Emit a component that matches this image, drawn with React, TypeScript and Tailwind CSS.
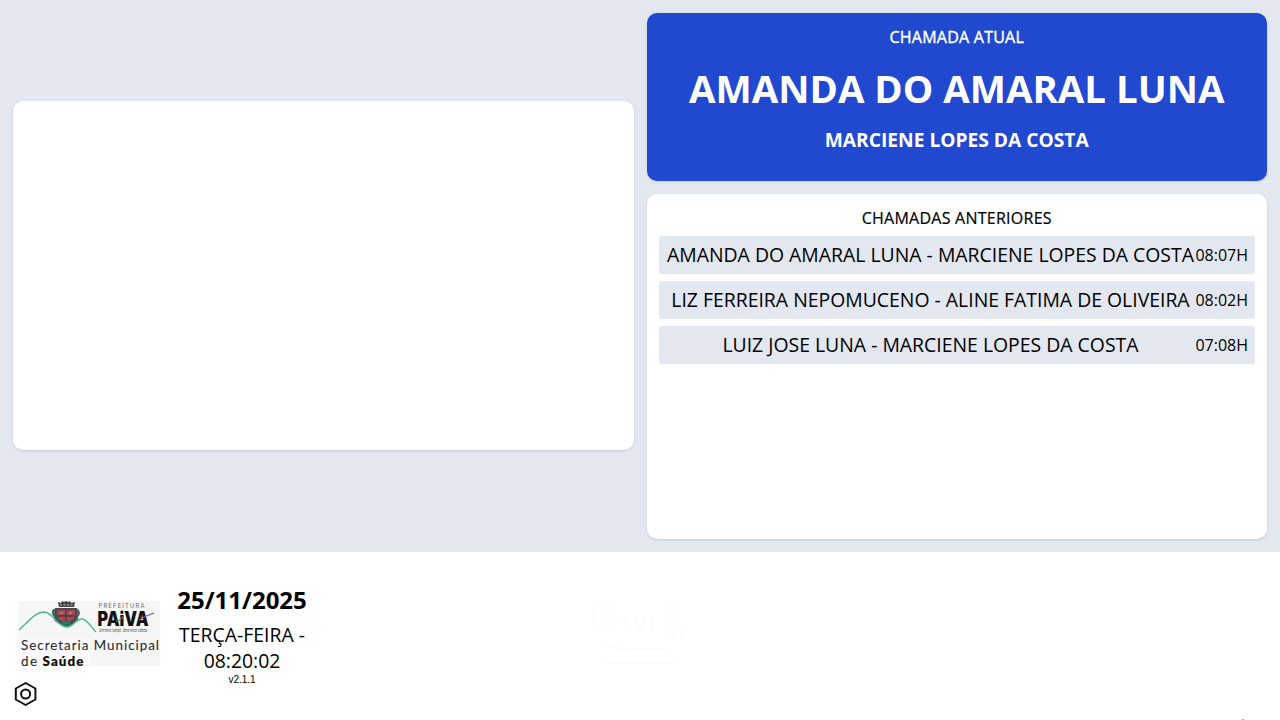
import React from 'react';

type Call = {
  patient: string;
  professional: string;
  time: string;
};

const previousCalls: Call[] = [
  { patient: 'AMANDA DO AMARAL LUNA', professional: 'MARCIENE LOPES DA COSTA', time: '08:07H' },
  { patient: 'LIZ FERREIRA NEPOMUCENO', professional: 'ALINE FATIMA DE OLIVEIRA', time: '08:02H' },
  { patient: 'LUIZ JOSE LUNA', professional: 'MARCIENE LOPES DA COSTA', time: '07:08H' },
];

const CityLogo = () => (
  <svg width="143" height="70" viewBox="0 0 143 70" className="block">
    <rect width="142" height="65" fill="#f6f6f6" />
    <rect y="38" width="72" height="27" fill="#fbfbfb" />
    {/* crest */}
    <g transform="translate(1 0)">
      <path d="M40 6l-1-5 3 1 1-2 2 1 2-1 2 1 2-1 1 2 4-1-1 5z" fill="#444" />
      <path d="M41 4h14" stroke="#bbb" strokeWidth="1" strokeDasharray="2 1.5" />
      <path d="M34 8q-3 4 1 8-1 4 4 6 8 6 16 0 5-2 4-6 4-4 0-8z" fill="#4d6b60" />
      <path d="M36 7h22v8q-1 8-11 11-10-3-11-11z" fill="#4c484e" />
      <path d="M38 9h18v6q-1 5-9 6-8-1-9-6z" fill="#a34a55" />
      <path d="M38 15h18M47 9v11" stroke="#4c3942" strokeWidth="1.4" />
      <path d="M41 12h3M50 12h3" stroke="#c99" strokeWidth="1.2" />
      <path d="M42 19q5 4 10 0l-2 5h-6z" fill="#2f7762" />
    </g>
    {/* hills */}
    <path
      d="M1 29C9 22 17 11 26 11c9 0 13 15 23 15 7 0 8-8 15-8 5 0 8 7 14 13"
      fill="none"
      stroke="#43b98e"
      strokeWidth="1.4"
    />
    <g className="[font-family:Inter,'Liberation_Sans',sans-serif]">
      <text x="80.5" y="7" fontSize="5.8" fill="#666" textLength="46">PREFEITURA</text>
      <text x="79.5" y="24.5" fontSize="19.5" fontWeight="900" fill="#111" textLength="51" lengthAdjust="spacingAndGlyphs">
        PAiVA
      </text>
      <path d="M98 20q4 0 8-5" fill="none" stroke="#35a67b" strokeWidth="1.2" />
      <path d="M121 19q6-4 15-7" fill="none" stroke="#8b4b9c" strokeWidth="1.3" />
      <text x="81" y="31" fontSize="4.6" fontStyle="italic" fill="#444" textLength="49" lengthAdjust="spacingAndGlyphs">
        Um novo tempo. Uma nova cidade.
      </text>
    </g>
    <g fontSize="13.4" fill="#2b2b2b" className="[font-family:Lato,'Open_Sans',sans-serif]">
      <text x="3" y="49" stroke="#2b2b2b" strokeWidth="0.1" textLength="138">Secretaria Municipal</text>
      <text x="3" y="64.5" stroke="#2b2b2b" strokeWidth="0.1" textLength="16">de</text>
      <text x="24.5" y="64.5" fontWeight="800" fill="#111" textLength="41">Saúde</text>
    </g>
  </svg>
);

const SettingsIcon = () => (
  <svg width="24" height="26" viewBox="0 0 24 26" fill="none" stroke="#111" strokeWidth="2" strokeLinejoin="round">
    <path d="M11.6 2l9.8 5.5v11L11.6 24l-9.8-5.5v-11z" />
    <circle cx="11.6" cy="13" r="4.5" />
  </svg>
);

// barely visible white-on-white logo in the footer
const FadedLogo = () => (
  <svg width="100" height="72" viewBox="0 0 100 72" fill="none" stroke="#fbfbfb" strokeWidth="2">
    <path d="M4 4v17q2 10 10 9M18 4v26M33 16l4 12M44 16l6 13 6-13M62 15v15M82 3v35h6M92 29v12" />
    <path d="M13 43q12 7 33 6h30M14 63h72" />
  </svg>
);

const App = () => {
  return (
    <div className="flex h-[720px] w-[1280px] flex-col overflow-hidden bg-white text-black [font-family:'Open_Sans','Noto_Sans',sans-serif]">
      <main className="grid h-[552px] grid-cols-2 gap-[13px] bg-[#e3e7f0] p-[13px]">
        <section className="mb-px h-[349px] self-center rounded-[10px] bg-white shadow-sm" />

        <div className="flex flex-col gap-[13px]">
          <section className="flex h-[168px] flex-col items-center rounded-[10px] bg-[#2149cf] text-white shadow-sm">
            <h2 className="mt-[12px] text-[16px] font-medium leading-[24px] tracking-[0.25px] [-webkit-text-stroke:0.4px]">
              CHAMADA ATUAL
            </h2>
            <h1 className="mt-[13px] text-[38.4px] font-bold leading-[52px] whitespace-nowrap">AMANDA DO AMARAL LUNA</h1>
            <p className="mt-[13px] text-[19.2px] font-bold leading-[26px]">MARCIENE LOPES DA COSTA</p>
          </section>

          <section className="flex h-[345px] flex-col rounded-[10px] bg-white px-[12.5px] pt-[12px] shadow-sm">
            <h2 className="text-center text-[16px] font-medium leading-[24px] tracking-[0.25px] [-webkit-text-stroke:0.2px]">
              CHAMADAS ANTERIORES
            </h2>
            <ul className="mt-[6px] flex flex-col gap-[7px]">
              {previousCalls.map((call) => (
                <li key={call.time} className="flex h-[38px] items-center rounded-[3px] bg-[#e3e7f0] px-[6.5px]">
                  <span className="flex-1 text-center text-[19.4px] whitespace-nowrap">
                    {call.patient} - {call.professional}
                  </span>
                  <span className="text-[16px]">{call.time}</span>
                </li>
              ))}
            </ul>
          </section>
        </div>
      </main>

      <footer className="flex h-[168px]">
        <div className="flex w-[160px] flex-col pt-[49px] pl-[18px]">
          <CityLogo />
          <button className="mt-[10px] -ml-[4px] w-6">
            <SettingsIcon />
          </button>
        </div>
        <div className="flex w-[164px] flex-col items-center pt-[32px] text-center">
          <strong className="text-[24px] font-bold leading-[32px]">25/11/2025</strong>
          <span className="mt-[6px] text-[19.4px] leading-[26px]">
            TERÇA-FEIRA -
            <br />
            08:20:02
          </span>
          <small className="text-[10px] leading-[12px] [font-family:'Liberation_Sans',sans-serif]">v2.1.1</small>
        </div>
        <div className="pt-[48px] pl-[266px]">
          <FadedLogo />
        </div>
        <i className="mt-auto ml-auto mr-[36px] h-px w-[2px] bg-gray-400" />
      </footer>
    </div>
  );
};

export default App;
